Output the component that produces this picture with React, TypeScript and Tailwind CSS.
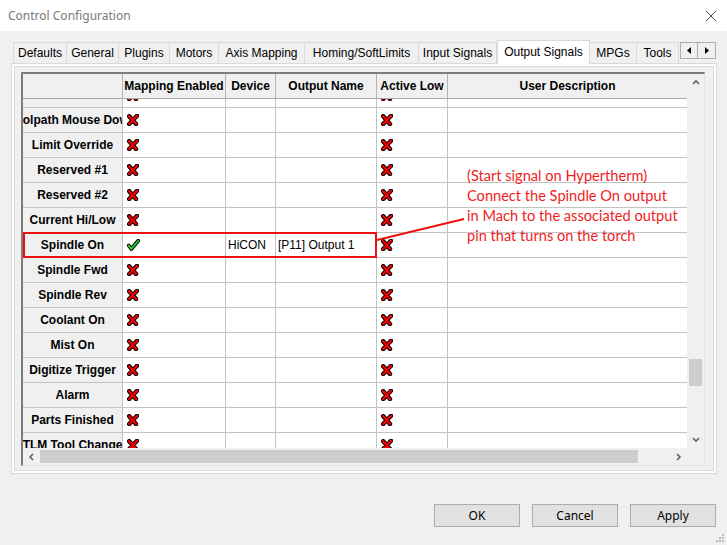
import React from 'react';

const tabs = [
  { name: 'Defaults', w: 54 },
  { name: 'General', w: 52 },
  { name: 'Plugins', w: 51 },
  { name: 'Motors', w: 49 },
  { name: 'Axis Mapping', w: 86 },
  { name: 'Homing/SoftLimits', w: 114 },
  { name: 'Input Signals', w: 78 },
  { name: 'Output Signals', w: 93, active: true },
  { name: 'MPGs', w: 47 },
  { name: 'Tools', w: 42 },
];

interface Row {
  name: string;
  enabled?: boolean;
  device?: string;
  output?: string;
}

const rows: Row[] = [
  { name: 'Dwell' },
  { name: 'Toolpath Mouse Down' },
  { name: 'Limit Override' },
  { name: 'Reserved #1' },
  { name: 'Reserved #2' },
  { name: 'Current Hi/Low' },
  { name: 'Spindle On', enabled: true, device: 'HiCON', output: '[P11] Output 1' },
  { name: 'Spindle Fwd' },
  { name: 'Spindle Rev' },
  { name: 'Coolant On' },
  { name: 'Mist On' },
  { name: 'Digitize Trigger' },
  { name: 'Alarm' },
  { name: 'Parts Finished' },
  { name: 'TLM Tool Change' },
];

function RedX() {
  return (
    <svg width="12" height="12" viewBox="0 0 12 12" className="shrink-0">
      <path d="M2.2 2.2 L9 10 M10 1.8 L2.2 10" stroke="#000" strokeWidth="4.4" strokeLinecap="round" fill="none" />
      <path d="M2.2 2.2 L9 10 M10 1.8 L2.2 10" stroke="#f00000" strokeWidth="2.4" strokeLinecap="round" fill="none" />
    </svg>
  );
}

function GreenCheck() {
  return (
    <svg width="13" height="12" viewBox="0 0 13 12" className="shrink-0">
      <path d="M1.8 6.5 L4.3 10 L11.2 1.8" stroke="#000" strokeWidth="3.8" strokeLinecap="round" strokeLinejoin="round" fill="none" />
      <path d="M1.8 6.5 L4.3 10 L11.2 1.8" stroke="#22d022" strokeWidth="1.9" strokeLinecap="round" strokeLinejoin="round" fill="none" />
    </svg>
  );
}

function Chevron({ dir }: { dir: 'up' | 'down' | 'left' | 'right' }) {
  const d = {
    up: 'M1 5 L4 2 L7 5',
    down: 'M1 2 L4 5 L7 2',
    left: 'M5 1 L2 4 L5 7',
    right: 'M2 1 L5 4 L2 7',
  }[dir];
  const vertical = dir === 'up' || dir === 'down';
  return (
    <svg width={vertical ? 8 : 7} height={vertical ? 7 : 8} viewBox={vertical ? '0 0 8 7' : '0 0 7 8'}>
      <path d={d} stroke="#606060" strokeWidth="1.6" fill="none" />
    </svg>
  );
}

export default function App() {
  return (
    <div className="relative w-[727px] h-[545px] overflow-hidden bg-[#f0f0f0] font-['Liberation_Sans',Arial,sans-serif] text-black">
      {/* title bar */}
      <div className="h-[31px] bg-white flex items-center justify-between pl-[8px] pr-[10px]">
        <span className="text-[12px] text-[#7a7a7a] font-['Noto_Sans',sans-serif]">Control Configuration</span>
        <svg width="12" height="12" viewBox="0 0 12 12">
          <path d="M1 1 L11 11 M11 1 L1 11" stroke="#555" strokeWidth="1" fill="none" />
        </svg>
      </div>

      {/* tab strip */}
      <div className="h-[32px] flex items-end pl-[13px]">
        {tabs.map((t, i) =>
          t.active ? (
            <div
              key={t.name}
              className="h-[24px] bg-white border border-b-0 border-[#d9d9d9] flex items-start justify-center pt-[2px] text-[12px] relative z-10 -mb-px"
              style={{ width: t.w }}
            >
              {t.name}
            </div>
          ) : (
            <div
              key={t.name}
              className={`h-[21px] bg-[#f0f0f0] border-t border-r border-[#d9d9d9] flex items-center justify-center text-[12px] ${i === 0 ? 'border-l' : ''}`}
              style={{ width: t.w }}
            >
              {t.name}
            </div>
          )
        )}
        <div className="self-start mt-[11px] ml-[1px] flex">
          <div className="w-[18px] h-[17px] border border-[#adadad] bg-[#f0f0f0] flex items-center justify-center">
            <svg width="4" height="7" viewBox="0 0 4 7"><path d="M4 0 L0 3.5 L4 7 Z" fill="#000" /></svg>
          </div>
          <div className="w-[18px] h-[17px] border border-l-0 border-[#adadad] bg-[#f0f0f0] flex items-center justify-center">
            <svg width="4" height="7" viewBox="0 0 4 7"><path d="M0 0 L4 3.5 L0 7 Z" fill="#000" /></svg>
          </div>
        </div>
      </div>

      {/* tab page */}
      <div className="ml-[11px] w-[706px] h-[411px] bg-white border border-[#d9d9d9] p-[2px]">
        <div className="h-full bg-[#f0f0f0] border border-[#dadada] pl-[6px] pt-[5px]">
          <div className="w-[684px] h-[394px] border-t-2 border-l-2 border-[#7d7d7d] border-r border-b border-r-[#e3e3e3] border-b-[#e3e3e3] flex flex-col bg-white">
            <div className="flex h-[374px]">
              {/* table */}
              <div className="w-[664px] flex flex-col">
                <div className="h-[25px] flex bg-[#f0f0f0] border-b border-[#a8a8a8] font-bold text-[12px]">
                  <div className="w-[100px] border-r border-[#b4b4b4]" />
                  <div className="w-[103px] border-r border-[#b4b4b4] flex items-center justify-center">Mapping Enabled</div>
                  <div className="w-[50px] border-r border-[#b4b4b4] flex items-center justify-center">Device</div>
                  <div className="w-[101px] border-r border-[#b4b4b4] flex items-center justify-center">Output Name</div>
                  <div className="w-[71px] border-r border-[#b4b4b4] flex items-center justify-center">Active Low</div>
                  <div className="w-[239px] flex items-center justify-center">User Description</div>
                </div>
                <div className="h-[349px] overflow-hidden">
                  <div className="-mt-[16px]">
                    {rows.map((r) => (
                      <div key={r.name} className="h-[25px] flex border-b border-[#c3c3c3] text-[12px]">
                        <div className="w-[100px] shrink-0 bg-[#f0f0f0] border-r border-[#c3c3c3] flex items-center justify-center overflow-hidden whitespace-nowrap font-bold">
                          <span className="shrink-0">{r.name}</span>
                        </div>
                        <div className="w-[103px] shrink-0 border-r border-[#c3c3c3] flex items-center pl-[4px]">
                          {r.enabled ? <GreenCheck /> : <RedX />}
                        </div>
                        <div className="w-[50px] shrink-0 border-r border-[#c3c3c3] flex items-center pl-[2px] whitespace-nowrap">
                          {r.device}
                        </div>
                        <div className="w-[101px] shrink-0 border-r border-[#c3c3c3] flex items-center pl-[2px] whitespace-nowrap">
                          {r.output}
                        </div>
                        <div className="w-[71px] shrink-0 border-r border-[#c3c3c3] flex items-center pl-[4px]">
                          <RedX />
                        </div>
                        <div className="w-[239px] shrink-0" />
                      </div>
                    ))}
                  </div>
                </div>
              </div>
              {/* vertical scrollbar */}
              <div className="w-[17px] bg-[#f0f0f0] flex flex-col items-center">
                <div className="h-[17px] w-full flex items-center justify-center">
                  <Chevron dir="up" />
                </div>
                <div className="flex-1 w-full px-[2px] pt-[268px]">
                  <div className="h-[27px] bg-[#cdcdcd]" />
                </div>
                <div className="h-[17px] w-full flex items-center justify-center">
                  <Chevron dir="down" />
                </div>
              </div>
            </div>
            {/* horizontal scrollbar */}
            <div className="flex h-[17px] bg-[#f0f0f0]">
              <div className="w-[664px] flex items-center">
                <div className="w-[17px] h-full flex items-center justify-center">
                  <Chevron dir="left" />
                </div>
                <div className="flex-1 h-full py-[2px] pr-[32px]">
                  <div className="h-full w-[598px] bg-[#cdcdcd]" />
                </div>
                <div className="w-[17px] h-full flex items-center justify-center">
                  <Chevron dir="right" />
                </div>
              </div>
              <div className="w-[17px]" />
            </div>
          </div>
        </div>
      </div>

      {/* buttons */}
      <div className="flex justify-end gap-[12px] pr-[11px] mt-[30px]">
        {['OK', 'Cancel', 'Apply'].map((b) => (
          <button
            key={b}
            className="w-[86px] h-[23px] bg-[#e1e1e1] border border-[#adadad] text-[12px] font-['Noto_Sans',sans-serif] leading-none"
          >
            {b}
          </button>
        ))}
      </div>

      {/* resize grip */}
      <svg className="absolute right-[2px] bottom-[2px]" width="10" height="10" viewBox="0 0 10 10">
        <rect x="7" y="1" width="2" height="2" fill="#bcbcbc" />
        <rect x="4" y="4" width="2" height="2" fill="#bcbcbc" />
        <rect x="7" y="4" width="2" height="2" fill="#bcbcbc" />
        <rect x="1" y="7" width="2" height="2" fill="#bcbcbc" />
        <rect x="4" y="7" width="2" height="2" fill="#bcbcbc" />
        <rect x="7" y="7" width="2" height="2" fill="#bcbcbc" />
      </svg>

      {/* annotation */}
      <div className="absolute left-[23px] top-[232px] w-[354px] h-[26px] border-2 border-[#ee1111]" />
      <svg className="absolute left-0 top-0 pointer-events-none" width="727" height="545">
        <line x1="377" y1="240" x2="464" y2="219" stroke="#ee1111" strokeWidth="2" />
      </svg>
      <div className="absolute left-[467px] top-[166px] text-[14.6px] leading-[20px] text-[#f01c24] font-['Lato',sans-serif] whitespace-nowrap">
        <div>(Start signal on Hypertherm)</div>
        <div>Connect the Spindle On output</div>
        <div>in Mach to the associated output</div>
        <div>pin that turns on the torch</div>
      </div>
    </div>
  );
}
